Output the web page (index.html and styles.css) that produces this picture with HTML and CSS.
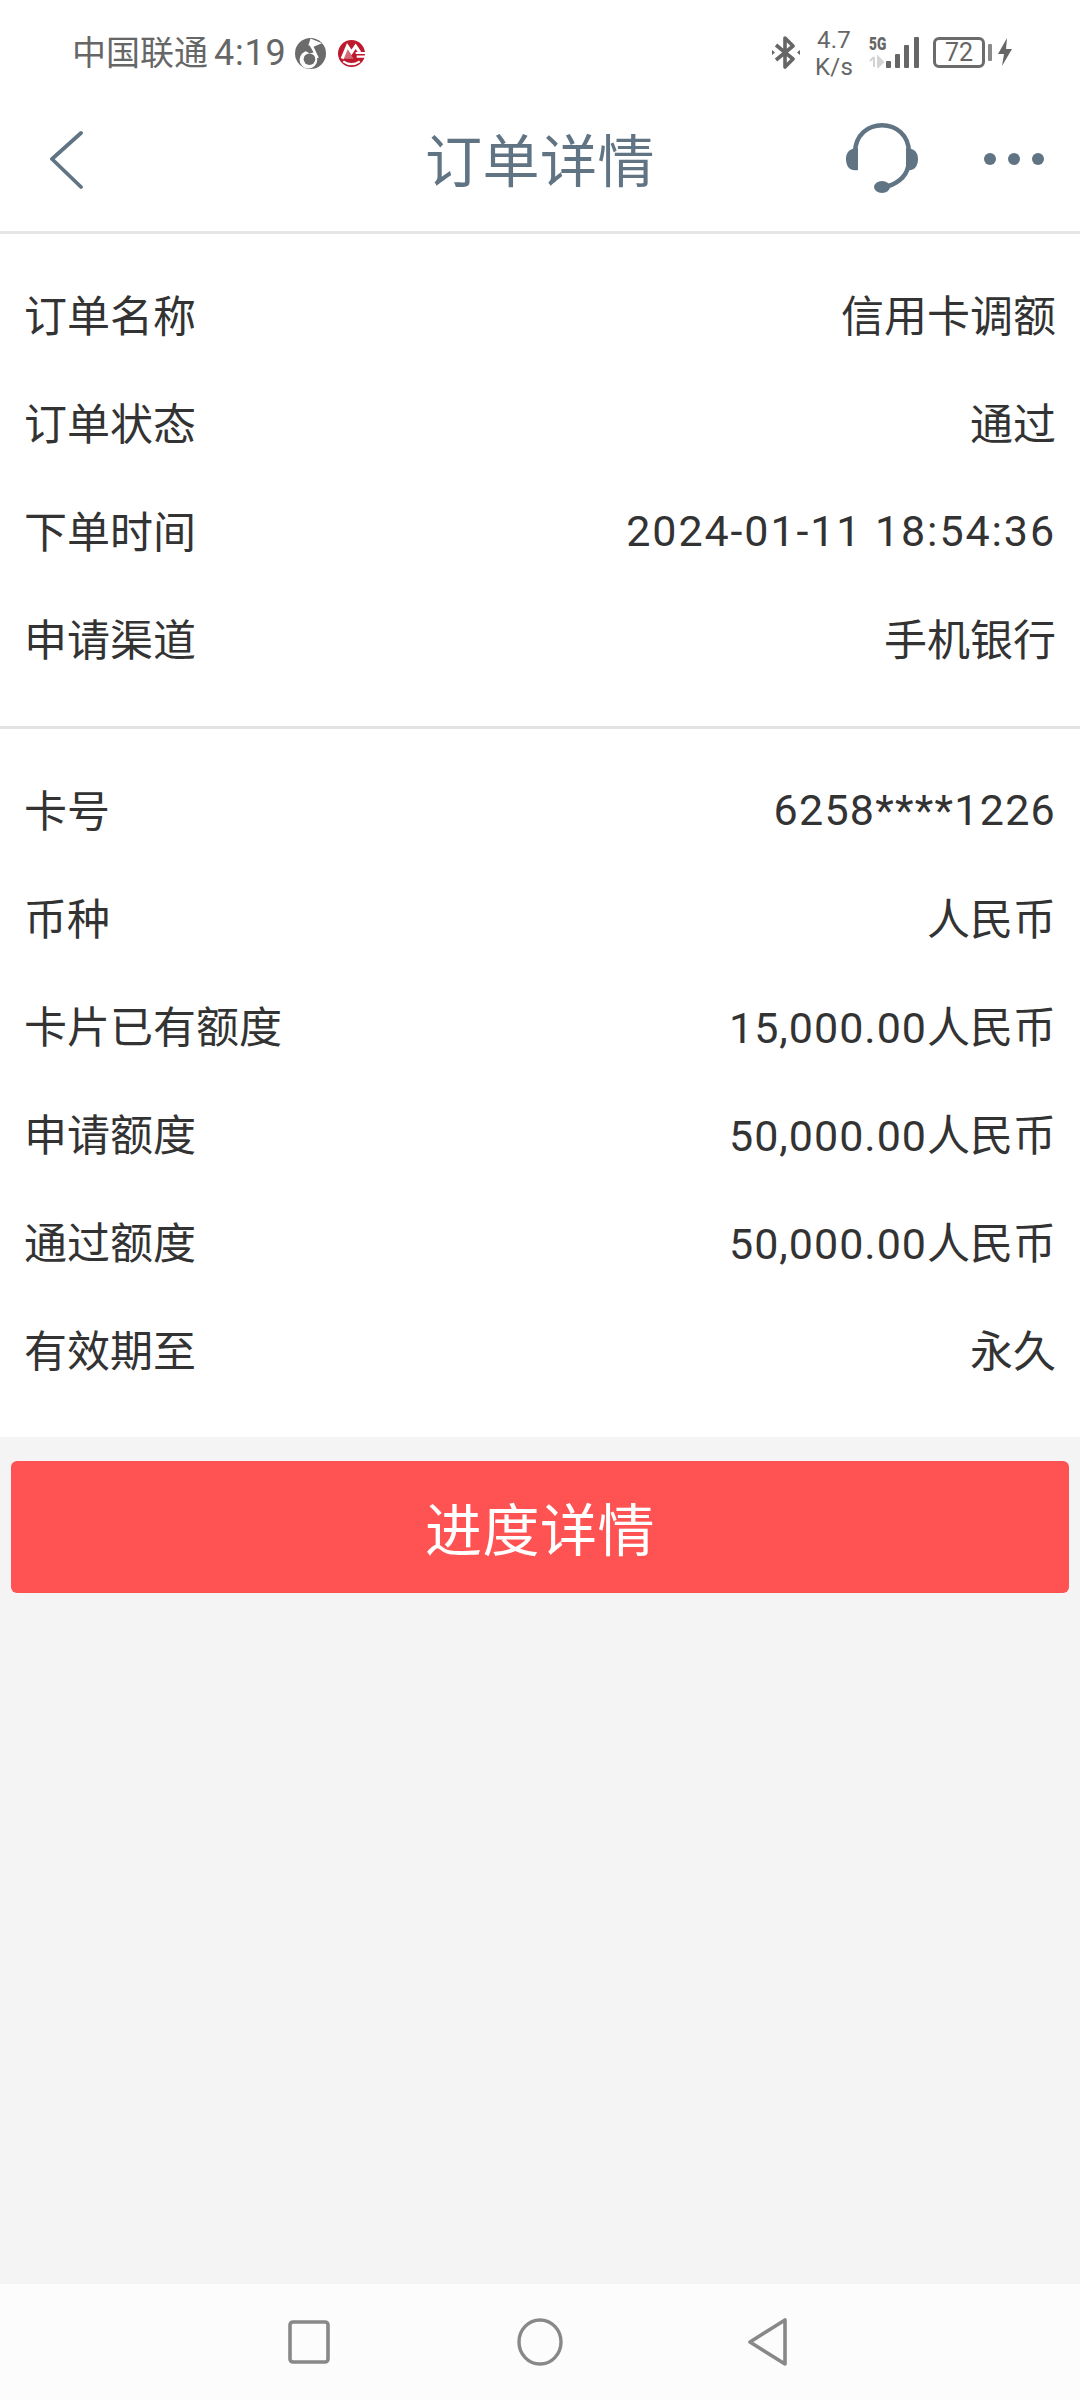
FILE: index.html
```html
<!DOCTYPE html>
<html lang="zh">
<head>
<meta charset="utf-8">
<title>订单详情</title>
<link rel="stylesheet" href="styles.css">
</head>
<body>
<div class="screen">
  <div class="status">
    <div class="status-left">
      <span class="carrier">中国联通</span>
      <span class="clock">4:19</span>
      <svg class="ic-music" viewBox="0 0 30 30"><circle cx="15" cy="15" r="15" fill="#6b6b6b"/><circle cx="13" cy="21" r="8.6" fill="#fff"/><path d="M15 0.5 L26 5 L18 8.5 L23 19 L19 20 L13 7 Z" fill="#fff"/><circle cx="14" cy="20.5" r="5.6" fill="#6b6b6b"/><path d="M8 11 L14 7 L18 14 L14 15 Z" fill="#6b6b6b"/></svg>
      <svg class="ic-bank" viewBox="0 0 26 26"><circle cx="13" cy="13" r="13" fill="#bd1a2d"/><path d="M4 18 L9 6 L13 12 L17 6 L21 12" fill="none" stroke="#fff" stroke-width="3"/><path d="M4 18 H15 L9 9 Z" fill="#fff" opacity="0.35"/><path d="M5 20.5 Q13 26 21 20.5 M17 12.5 H26 M18 16 H26" fill="none" stroke="#fff" stroke-width="2"/></svg>
    </div>
    <div class="status-right">
      <svg class="ic-bt" viewBox="0 0 28 33"><path d="M4 9 L21 23 L13 31 V2 L21 10 L4 24" fill="none" stroke="#666" stroke-width="3.6" stroke-linejoin="round"/><path d="M0 14 L3 16.5 L0 19 Z M28 14 L25 16.5 L28 19 Z" fill="#666"/></svg>
      <div class="speed"><span>4.7</span><span>K/s</span></div>
      <div class="signal">
        <span class="sig-text">5G</span>
        <svg class="ic-signal" viewBox="0 0 50 32"><path d="M5 21 V31 M1 25 L5 21 M9 21 V31 L14 26 L9 21 Z" stroke="#d4d4d4" stroke-width="2" fill="#d4d4d4"/><rect x="17" y="25" width="5" height="7" rx="1" fill="#666"/><rect x="26" y="18" width="5" height="14" rx="1" fill="#666"/><rect x="35" y="9" width="5" height="23" rx="1" fill="#666"/><rect x="45" y="1" width="5" height="31" rx="1" fill="#666"/></svg>
      </div>
      <div class="battery"><span class="battery-body">72</span><span class="battery-cap"></span></div>
      <svg class="ic-bolt" viewBox="0 0 14 28"><path d="M9 0 L0 16 H6 L4 28 L14 11 H8 Z" fill="#666"/></svg>
    </div>
  </div>

  <header class="nav">
    <svg class="ic-back" viewBox="0 0 34 60"><path d="M32 3 L3 29 L32 57" fill="none" stroke="#607484" stroke-width="3.8" stroke-linecap="round" stroke-linejoin="round"/></svg>
    <h1 class="title">订单详情</h1>
    <svg class="ic-head" viewBox="0 0 72 70"><path d="M9 30 C9 -7 63 -7 63 30" fill="none" stroke="#607484" stroke-width="4.5"/><path d="M12 25 V47 C3 49 0 42 0 36 C0 30 3 25 12 25 Z M60 25 V47 C69 49 72 42 72 36 C72 30 69 25 60 25 Z" fill="#607484"/><path d="M62 44 C60 54 50 62 38 64" fill="none" stroke="#607484" stroke-width="4.5"/><ellipse cx="36" cy="64" rx="8" ry="6" fill="#607484"/></svg>
    <div class="dots"><i></i><i></i><i></i></div>
  </header>

  <main class="content">
    <section class="group first">
      <div class="row"><span>订单名称</span><span>信用卡调额</span></div>
      <div class="row"><span>订单状态</span><span>通过</span></div>
      <div class="row"><span>下单时间</span><span class="digits date">2024-01-11 18:54:36</span></div>
      <div class="row"><span>申请渠道</span><span>手机银行</span></div>
    </section>
    <section class="group second">
      <div class="row"><span>卡号</span><span class="digits card">6258****1226</span></div>
      <div class="row"><span>币种</span><span>人民币</span></div>
      <div class="row"><span>卡片已有额度</span><span><span class="num">15,000.00</span>人民币</span></div>
      <div class="row"><span>申请额度</span><span><span class="num">50,000.00</span>人民币</span></div>
      <div class="row"><span>通过额度</span><span><span class="num">50,000.00</span>人民币</span></div>
      <div class="row"><span>有效期至</span><span>永久</span></div>
    </section>
    <div class="action"><button class="progress" type="button">进度详情</button></div>
  </main>

  <footer class="sysnav">
    <svg class="nav-square" viewBox="0 0 42 44"><rect x="2" y="2" width="38" height="40" rx="3" fill="none" stroke="#888" stroke-width="3.6"/></svg>
    <svg class="nav-circle" viewBox="0 0 46 48"><ellipse cx="23" cy="24" rx="21" ry="22" fill="none" stroke="#888" stroke-width="3.4"/></svg>
    <svg class="nav-tri" viewBox="0 0 42 48"><path d="M3 24 L38 2 V46 Z" fill="none" stroke="#888" stroke-width="3.6" stroke-linejoin="round"/></svg>
  </footer>
</div>
</body>
</html>
```
FILE: styles.css
```css
* { box-sizing: border-box; }
html, body { margin: 0; padding: 0; }
body {
  width: 1080px;
  height: 2400px;
  background: #f4f4f4;
  font-family: "Roboto", "Noto Sans CJK SC", sans-serif;
  overflow: hidden;
}
.screen { width: 1080px; height: 2400px; display: flex; flex-direction: column; }

.status {
  height: 100px;
  background: #fff;
  display: flex;
  align-items: center;
  justify-content: space-between;
  padding: 6px 68px 0 72px;
  color: #666;
}
.status-left { display: flex; align-items: center; }
.carrier { font-size: 34px; line-height: 40px; }
.clock { font-size: 36px; line-height: 40px; margin-left: 6px; letter-spacing: 0.8px; }
.ic-music { width: 31px; height: 31px; margin-left: 8px; }
.ic-bank { width: 27px; height: 27px; margin-left: 12px; }
.status-right { display: flex; align-items: center; margin-top: -2px; }
.ic-bt { width: 28px; height: 33px; }
.speed { display: flex; flex-direction: column; align-items: center; font-size: 24px; line-height: 27px; width: 40px; margin-left: 14px; padding-top: 3px; letter-spacing: 0.3px; }
.signal { position: relative; width: 50px; height: 32px; margin-left: 15px; }
.ic-signal { display: block; width: 50px; height: 32px; }
.sig-text { position: absolute; left: 0; top: -2px; font-size: 19px; line-height: 19px; font-weight: 900; color: #666; transform: scaleX(0.72); transform-origin: left center; }
.battery { display: flex; align-items: center; margin-left: 14px; }
.battery-body { width: 52px; height: 31px; border: 3px solid #6b6b6b; border-radius: 6px; font-size: 25px; line-height: 25px; text-align: center; }
.battery-cap { width: 4px; height: 17px; background: #8a8a8a; margin-left: 3px; border-radius: 1px; }
.ic-bolt { width: 14px; height: 28px; margin-left: 6px; }

.nav {
  height: 134px;
  background: #fff;
  border-bottom: 3px solid #e6e6e6;
  position: relative;
  display: flex;
  align-items: center;
  padding-bottom: 5px;
}
.title {
  margin: 0;
  width: 100%;
  text-align: center;
  font-size: 57px;
  font-weight: 400;
  line-height: 70px;
  color: #607484;
  letter-spacing: 0.5px;
}
.ic-back { position: absolute; left: 49px; top: 30px; width: 34px; height: 60px; }
.ic-head { position: absolute; left: 846px; top: 23px; width: 72px; height: 70px; }
.dots { position: absolute; left: 984px; top: 53px; display: flex; gap: 12px; }
.dots i { display: block; width: 12px; height: 12px; border-radius: 50%; background: #607484; }

.content { flex: 1; display: flex; flex-direction: column; }
.group { background: #fff; }
.group.first { padding: 25px 0 35px; border-bottom: 3px solid #e2e2e2; }
.group.second { padding: 25px 0 35px; }
.row {
  height: 108px;
  display: flex;
  align-items: center;
  justify-content: space-between;
  padding: 0 24px;
  font-size: 43px;
  color: #333;
}
.digits { padding-top: 4px; }
.date { letter-spacing: 1.9px; }
.card { letter-spacing: 1.25px; }
.num { letter-spacing: 1px; }
.action { padding: 24px 11px 0; }
.progress {
  display: block;
  width: 100%;
  height: 132px;
  border: 0;
  border-radius: 6px;
  background: #ff5252;
  color: #fff;
  font: inherit;
  font-size: 57px;
  letter-spacing: 0.5px;
  padding: 0 0 2px;
}

.sysnav {
  height: 116px;
  background: #fcfcfc;
  position: relative;
}
.sysnav svg { position: absolute; }
.nav-square { left: 288px; top: 36px; width: 42px; height: 44px; }
.nav-circle { left: 517px; top: 34px; width: 46px; height: 48px; }
.nav-tri { left: 747px; top: 34px; width: 42px; height: 48px; }
```
